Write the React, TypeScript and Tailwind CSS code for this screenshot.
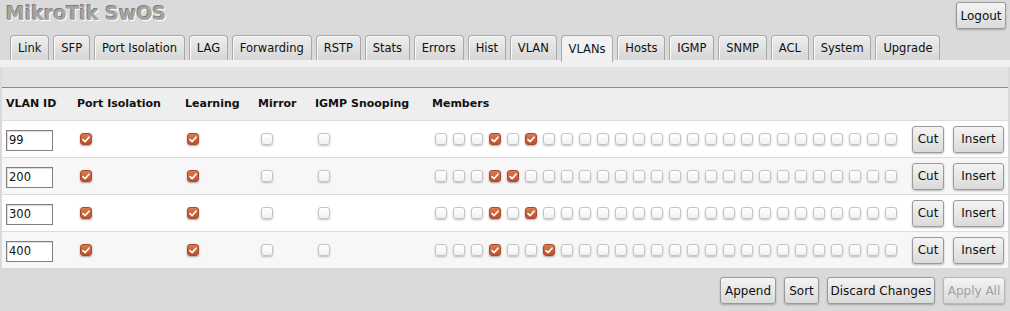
import React from "react";

const tabs = ["Link", "SFP", "Port Isolation", "LAG", "Forwarding", "RSTP", "Stats", "Errors", "Hist", "VLAN", "VLANs", "Hosts", "IGMP", "SNMP", "ACL", "System", "Upgrade"];

const vlans = [
  { id: "99", members: [3, 5] },
  { id: "200", members: [3, 4] },
  { id: "300", members: [3, 5] },
  { id: "400", members: [3, 6] },
];

function Check({ on }: { on?: boolean }) {
  if (on) {
    return (
      <span className="inline-flex w-[12px] h-[12px] rounded-[3px] bg-gradient-to-b from-[#dc7a50] to-[#b9502c] border border-[#a9492a] shadow-[0_1px_2px_rgba(0,0,0,0.35)] items-center justify-center shrink-0">
        <svg width="8" height="7" viewBox="0 0 8 7">
          <path d="M1 3.6 L3.1 5.6 L7 1.2" stroke="#fff" strokeWidth="1.6" fill="none" strokeLinecap="round" strokeLinejoin="round" />
        </svg>
      </span>
    );
  }
  return <span className="inline-block w-[12px] h-[12px] rounded-[3px] bg-gradient-to-b from-white to-[#f1f1f1] border border-[#c4c4c4] shadow-[0_1px_2px_rgba(0,0,0,0.25)] shrink-0" />;
}

function Btn({ children, disabled, className }: { children: React.ReactNode; disabled?: boolean; className?: string }) {
  return (
    <button
      className={
        "h-[27px] px-0 whitespace-nowrap rounded-[3px] border border-[#9a9a9a] bg-gradient-to-b from-[#f4f4f4] to-[#dadada] shadow-[0_1px_2px_rgba(0,0,0,0.25)] text-[12px] leading-none " +
        (disabled ? "text-[#a0a0a0] border-[#b8b8b8]" : "text-[#111]") +
        " " +
        (className || "")
      }
    >
      {children}
    </button>
  );
}

export default function App() {
  return (
    <main className="w-[1010px] h-[311px] bg-[#dadada] font-['DejaVu_Sans',sans-serif] text-[#111] overflow-hidden">
      <div className="flex justify-between items-start h-[35px] pl-[6px] pr-[4px] pt-[2px]">
        <h1 className="text-[19px] font-bold text-[#a4a4a4] leading-none mt-[2px] [text-shadow:-1px_-1px_0_#7d7d7d,1px_1px_0_#ffffff]">MikroTik SwOS</h1>
        <Btn className="w-[50px]">Logout</Btn>
      </div>

      <div className="flex gap-[4px] pl-[10px] h-[25px] items-end">
        {tabs.map((t) => (
          <div
            key={t}
            className={
              "px-[6.9px] pt-[1px] rounded-t-[4px] border border-b-0 border-[#a9a9a9] text-[11.5px] flex items-center " +
              (t === "VLANs"
                ? "h-[27px] bg-[#f1f1f1] -mb-[2px] relative"
                : "h-[25px] bg-gradient-to-b from-[#eeeeee] to-[#d6d6d6] shadow-[inset_1px_1px_0_#fafafa]")
            }
          >
            {t}
          </div>
        ))}
      </div>

      <div className="h-[7px] bg-[#f0f0f0]" />
      <div className="h-[20px] bg-[#e2e2e2] mx-[2px]" />

      <div className="mx-[2px] border-t border-[#8a8a8a] bg-white">
        <div className="grid grid-cols-[71px_108px_73px_57px_117px_1fr] items-center h-[32px] bg-[#eeeeee] pl-[4px] text-[11px] font-bold">
          <div>VLAN ID</div>
          <div>Port Isolation</div>
          <div>Learning</div>
          <div>Mirror</div>
          <div>IGMP Snooping</div>
          <div>Members</div>
        </div>
        {vlans.map((v, i) => (
          <div
            key={v.id}
            className={
              "grid grid-cols-[71px_108px_73px_57px_117px_1fr] items-center h-[37px] border-t border-[#dcdcdc] pl-[4px] " +
              (i % 2 === 1 ? "bg-[#f7f7f7]" : "bg-white")
            }
          >
            <div>
              <input
                defaultValue={v.id}
                className="w-[47px] h-[21px] border border-[#808080] bg-white px-[2px] text-[11.5px] shadow-[inset_1px_1px_1px_rgba(0,0,0,0.15)] outline-none"
              />
            </div>
            <div className="pl-[3px] flex"><Check on /></div>
            <div className="pl-[2px] flex"><Check on /></div>
            <div className="pl-[3px] flex"><Check /></div>
            <div className="pl-[3px] flex"><Check /></div>
            <div className="flex items-center pl-[3px]">
              <div className="flex gap-[6px]">
                {Array.from({ length: 26 }).map((_, k) => (
                  <Check key={k} on={v.members.includes(k)} />
                ))}
              </div>
              <div className="ml-auto flex gap-[9px] pr-[4px]">
                <Btn className="w-[32px]">Cut</Btn>
                <Btn className="w-[51px]">Insert</Btn>
              </div>
            </div>
          </div>
        ))}
      </div>

      <div className="flex justify-end gap-[8px] pr-[5px] pt-[9px]">
        <Btn className="w-[56px]">Append</Btn>
        <Btn className="w-[35px]">Sort</Btn>
        <Btn className="w-[108px]">Discard Changes</Btn>
        <Btn className="w-[62px]" disabled>Apply All</Btn>
      </div>
    </main>
  );
}
